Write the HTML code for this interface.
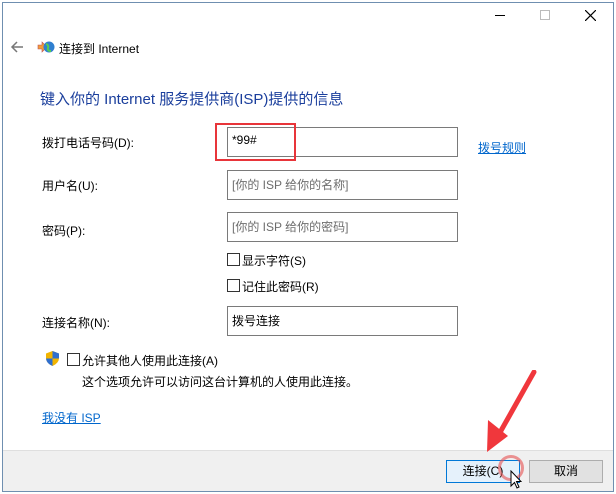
<!DOCTYPE html>
<html><head><meta charset="utf-8"><style>
*{margin:0;padding:0;box-sizing:border-box}
body{width:616px;height:494px;background:#fff;font-family:"Liberation Sans","Noto Sans CJK SC",sans-serif;font-size:12px;color:#000;position:relative;overflow:hidden}
.win{position:absolute;left:2px;top:2px;width:612px;height:490px;border:1px solid #6f8fb0;background:#fff}
.a{position:absolute;white-space:nowrap}
.inp{position:absolute;height:30px;width:231px;border:1px solid #7a7a7a;background:#fff;padding:5px 4px;color:#6d6d6d}
.cb{position:absolute;width:13px;height:13px;border:1px solid #333;background:#fff}
.link{color:#0066cc;text-decoration:underline}
.footer{position:absolute;left:3px;top:450px;width:610px;height:41px;background:#f0f0f0;border-top:1px solid #dfdfdf}
.btn{position:absolute;height:23px;width:74px;border:1px solid #adadad;background:#e1e1e1;text-align:center;line-height:21px}
</style></head><body>
<div class="win"></div>
<!-- title bar controls -->
<div class="a" style="left:495px;top:15px;width:10px;height:1px;background:#000"></div>
<div class="a" style="left:540px;top:10px;width:10px;height:10px;border:1px solid #bbb"></div>
<svg class="a" style="left:585px;top:10px" width="11" height="11"><path d="M0 0L11 11M11 0L0 11" stroke="#000" stroke-width="1.2"/></svg>
<!-- back arrow -->
<svg class="a" style="left:10px;top:41px" width="14" height="12"><path d="M13 6H2M7 1L2 6L7 11" stroke="#777" stroke-width="1.5" fill="none"/></svg>
<svg class="a" style="left:37px;top:40px" width="18" height="14"><path d="M1 5h4v-3l5 5-5 5v-3H1z" fill="#f29b3a" stroke="#b55" stroke-width=".6"/><circle cx="12" cy="7" r="5.5" fill="#2f7fd0"/><path d="M9 4q3 1 2 4t3 3" stroke="#5c5" stroke-width="2" fill="none"/></svg>
<div class="a" style="left:59px;top:40px;font-size:12px">连接到 Internet</div>
<div class="a" style="left:40px;top:88px;font-size:15px;color:#1a3e9c">键入你的 Internet 服务提供商(ISP)提供的信息</div>

<div class="a" style="left:42px;top:134px">拨打电话号码(D):</div>
<div class="inp" style="left:227px;top:127px;color:#000">*99#</div>
<div class="a" style="left:215px;top:123px;width:81px;height:38px;border:2px solid #e8353a"></div>
<div class="a link" style="left:478px;top:139px">拨号规则</div>

<div class="a" style="left:42px;top:177px">用户名(U):</div>
<div class="inp" style="left:227px;top:170px">[你的 ISP 给你的名称]</div>
<div class="a" style="left:42px;top:222px">密码(P):</div>
<div class="inp" style="left:227px;top:212px">[你的 ISP 给你的密码]</div>

<div class="cb" style="left:227px;top:253px"></div><div class="a" style="left:242px;top:252px">显示字符(S)</div>
<div class="cb" style="left:227px;top:279px"></div><div class="a" style="left:242px;top:278px">记住此密码(R)</div>

<div class="a" style="left:42px;top:314px">连接名称(N):</div>
<div class="inp" style="left:227px;top:306px;color:#000">拨号连接</div>

<svg class="a" style="left:45px;top:350px" width="15" height="17"><path d="M7.5 1L14 3.5V8q0 5-6.5 8Q1 13 1 8V3.5z" fill="#f2b400"/><path d="M7.5 1L14 3.5V8.5H7.5zM7.5 8.5H1q.5 5 6.5 7.5z" fill="#2f6fcf"/></svg>
<div class="cb" style="left:67px;top:353px"></div>
<div class="a" style="left:82px;top:352px">允许其他人使用此连接(A)</div>
<div class="a" style="left:82px;top:373px">这个选项允许可以访问这台计算机的人使用此连接。</div>
<div class="a link" style="left:42px;top:409px">我没有 ISP</div>

<div class="footer"></div>
<div class="btn" style="left:446px;top:460px;background:#e5f1fb;border-color:#0078d7">连接(C)</div>
<div class="btn" style="left:529px;top:460px">取消</div>
<!-- red arrow annotation -->
<svg class="a" style="left:480px;top:370px" width="60" height="90"><path d="M54 2L18 66" stroke="#f0373c" stroke-width="5" stroke-linecap="round"/><path d="M7 82L8 50L28 66z" fill="#f0373c"/></svg>
<div class="a" style="left:498px;top:455px;width:26px;height:26px;border:3px solid rgba(230,80,80,.6);border-radius:50%"></div>
<svg class="a" style="left:510px;top:470px" width="12" height="20"><path d="M1 1V16L4.5 12.5L7 18L9 17L6.5 11.5H11z" fill="#fff" stroke="#000"/></svg>
</body></html>
